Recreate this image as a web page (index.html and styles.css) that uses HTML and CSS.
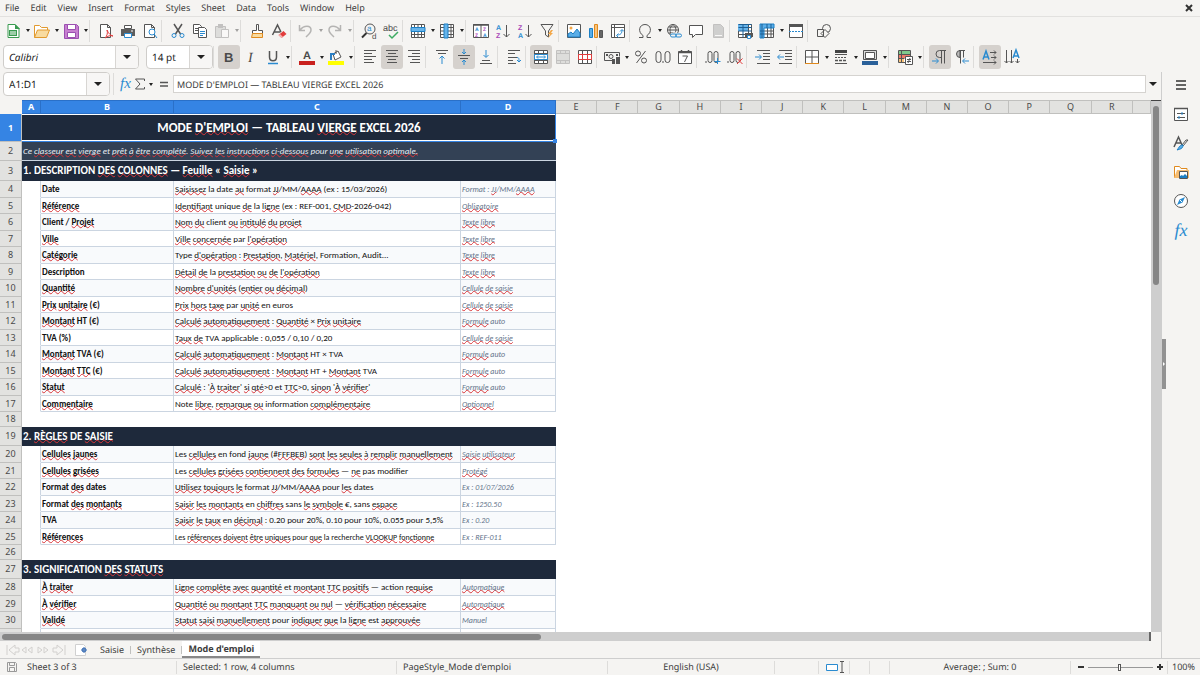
FILE: index.html
```html
<!DOCTYPE html>
<html lang="en">
<head>
<meta charset="utf-8">
<title>Mode d'emploi</title>
<link rel="stylesheet" href="styles.css">
</head>
<body>
<div class="app">
<nav class="menubar">
<button>File</button><button>Edit</button><button>View</button><button>Insert</button><button>Format</button><button>Styles</button><button>Sheet</button><button>Data</button><button>Tools</button><button>Window</button><button>Help</button>
<button class="close" aria-label="Close"><svg class="i8" viewBox="0 0 8 8"><path class="heavy" d="M1 1l6 6M7 1L1 7"/></svg></button>
</nav>

<div class="toolbars">
<div class="toolbar standard" role="toolbar" aria-label="Standard">
<button class="tb drop" aria-label="New"><svg viewBox="0 0 16 16"><path d="M3 1.500h7l4 4v9H3z" fill="#fff" stroke="#3a9b50"/><path d="M10 1v5h5z" fill="#3a9b50"/><path d="M4 7h8v6H4z" fill="#3a9b50"/><path d="M5 9h6M5 11h6" stroke="#fff"/></svg><i class="arrow"></i></button>
<button class="tb drop" aria-label="Open"><svg viewBox="0 0 16 16"><path d="M.5 14.500V2.500h5l2 2h6v3" fill="#fff" stroke="#e29a2e"/><path d="M.5 14.500l3-7.500h12l-3 7.500z" fill="#f8dba0" stroke="#e29a2e"/></svg><i class="arrow"></i></button>
<button class="tb drop" aria-label="Save"><svg viewBox="0 0 16 16"><path d="M1.500 1.500h12l2 2v12h-14z" fill="#c77fd0" stroke="#9b4fb0"/><path d="M4.500 1.500h8v5h-8zM4.500 9.500h8v5h-8z" fill="#fff" stroke="#9b4fb0"/></svg><i class="arrow"></i></button>
<span class="sep wide"></span>
<button class="tb" aria-label="Export PDF"><svg viewBox="0 0 16 16"><path class="k" fill="#fff" d="M2.500 1.500h7l3 3v10h-10zM9.500 1.500v3h3"/><path class="r" d="M9 7c2 4 3 5 6 6-3-1-5 0-8 2 2-2 3-5 2-8z"/></svg></button>
<button class="tb" aria-label="Print"><svg viewBox="0 0 16 16"><path d="M1 6h14v7H1z" fill="#5d5d5d"/><path class="k" fill="#fff" d="M4.500 2.500h7v3h-7z"/><path d="M4.500 10.500h7v4h-7z" fill="#fff" stroke="#2a8bd0"/><path d="M11 8h2" stroke="#fff"/></svg></button>
<button class="tb" aria-label="Preview"><svg viewBox="0 0 16 16"><path class="k" fill="#fff" d="M2.500 1.500h7l3 3v10h-10zM9.500 1.500v3h3"/><circle class="b" cx="10" cy="9" r="3" fill="#fff"/><path class="b" d="M12 11l3 4"/></svg></button>
<span class="sep wide"></span>
<button class="tb" aria-label="Cut"><svg viewBox="0 0 16 16"><path class="k w" d="M4 1l6.500 10M12 1L5.500 11"/><circle class="b" cx="4" cy="12.500" r="2"/><circle class="b" cx="12" cy="12.500" r="2"/></svg></button>
<button class="tb" aria-label="Copy"><svg viewBox="0 0 16 16"><path class="k" fill="#fff" d="M1.500 1.500h6l2 2v7h-8zM3 5.500h4M3 7.500h4"/><path class="k" fill="#fff" d="M6.500 4.500h6l2 2v8h-8z"/><path class="b" d="M8 8.500h5M8 10.500h5M8 12.500h3"/></svg></button>
<button class="tb drop" aria-label="Paste" disabled><svg viewBox="0 0 16 16"><path d="M1.500 3.500h10v11h-10z" fill="#bbb" stroke="#777"/><path d="M4 1h5v4H4z" fill="#777"/><path d="M7.500 6.500h7v8h-7z" fill="#fff" stroke="#777"/></svg><i class="arrow"></i></button>
<span class="sep wide"></span>
<button class="tb" aria-label="Clone formatting"><svg viewBox="0 0 16 16"><path class="k" fill="#fff" d="M7.500 1.500h2v6h4v3h-10v-3h4z"/><path d="M3.500 10.500h10v4h-11z" fill="#f8dba0" stroke="#e08a1e"/></svg></button>
<button class="tb" aria-label="Clear formatting"><svg viewBox="0 0 16 16"><path class="k w" d="M1.500 12L6.500 2l3.500 7M3.500 9h6"/><path d="M7.500 12l5-4 3 3-5 4z" fill="#e23c3c"/><path d="M7.500 12l1.500-1 3 3-1.500 1z" fill="#f6b4b4"/></svg></button>
<span class="sep"></span>
<button class="tb drop" aria-label="Undo" disabled><svg viewBox="0 0 16 16"><path class="k w" d="M1.500 2v5.500H7M2 7c4-5 11-5 11 0 0 3-3 5-5 7"/></svg><i class="arrow"></i></button>
<button class="tb drop" aria-label="Redo" disabled><svg viewBox="0 0 16 16"><path class="k w" d="M13.500 2v5.500H8M13 7C9 2 2 2 2 7c0 3 3 5 5 7"/></svg><i class="arrow"></i></button>
<span class="sep"></span>
<button class="tb" aria-label="Find and replace"><svg viewBox="0 0 16 16"><circle class="k" cx="9" cy="6" r="5"/><path class="k heavy" d="M5.500 10L1 14.500"/><text x="6" y="8" class="tblue" font-size="8">a</text><text x="11" y="16" class="tdark" font-size="8">d</text></svg></button>
<button class="tb" aria-label="Spelling"><svg viewBox="0 0 16 16"><text x="0" y="8" class="tdark" font-size="9">abc</text><path d="M6 12l3 3 6-6" fill="none" stroke="#3cab62" stroke-width="1.500"/></svg></button>
<span class="sep"></span>
<button class="tb drop" aria-label="Row"><svg viewBox="0 0 16 16"><path class="k" fill="#fff" d="M1.500 1.500h13v13h-13zM4.500 1.500v13M8 1.500v13M11.500 1.500v13M1.500 11.500h13"/><path d="M1 4.500h14v4H1z" fill="#67b4ea" stroke="#1c7fc4"/></svg><i class="arrow"></i></button>
<button class="tb drop" aria-label="Column"><svg viewBox="0 0 16 16"><path class="k" fill="#fff" d="M1.500 1.500h13v13h-13zM1.500 4.500h13M1.500 8h13M1.500 11.500h13M12 1.500v13"/><path d="M5 1h4v14H5z" fill="#67b4ea" stroke="#1c7fc4"/></svg><i class="arrow"></i></button>
<span class="sep"></span>
<button class="tb" aria-label="Sort"><svg viewBox="0 0 16 16"><path class="k" fill="#fff" d="M.5 1.500h15v13H.5zM8 2v12"/><path class="k w" d="M0 2h16"/><text x="2" y="8" class="tblue bold" font-size="5">A</text><text x="10" y="8" class="tpurple bold" font-size="5">Z</text><text x="2" y="14" class="tpurple bold" font-size="5">Z</text><text x="10" y="14" class="tblue bold" font-size="5">A</text></svg></button>
<button class="tb" aria-label="Sort ascending"><svg viewBox="0 0 16 16"><text x="1" y="7" class="tblue bold" font-size="7">A</text><text x="1" y="15" class="tpurple bold" font-size="7">Z</text><path class="k" d="M11.500 2v12M8.500 11l3 3 3-3"/></svg></button>
<button class="tb" aria-label="Sort descending"><svg viewBox="0 0 16 16"><text x="1" y="7" class="tpurple bold" font-size="7">Z</text><text x="1" y="15" class="tblue bold" font-size="7">A</text><path class="k" d="M11.500 2v12M8.500 11l3 3 3-3"/></svg></button>
<button class="tb" aria-label="AutoFilter"><svg viewBox="0 0 16 16"><path class="k" d="M2 1.500h12L9.500 8v6l-3-2V8z"/><path d="M12 7l-3 4h2l-2 4 5-5h-2l2-3z" fill="#f3a84a"/></svg></button>
<span class="sep"></span>
<button class="tb" aria-label="Image"><svg viewBox="0 0 16 16"><path class="k" fill="#fff" d="M1.500 1.500h13v13h-13z"/><circle cx="5" cy="5" r="1.500" fill="#f3a84a"/><path d="M2 14v-3l3-2 2 2 4-5 3 4v4z" fill="#5aaee8" stroke="#1c7fc4"/></svg></button>
<button class="tb" aria-label="Chart"><svg viewBox="0 0 16 16"><path d="M1.500 5.500h3v9h-3z" fill="#5aaee8" stroke="#1c7fc4"/><path d="M6.500 1.500h3v13h-3z" fill="#f8c37c" stroke="#e08a1e"/><path d="M11.500 7.500h3v7h-3z" fill="#666" stroke="#555"/></svg></button>
<button class="tb" aria-label="Pivot table"><svg viewBox="0 0 16 16"><path class="k" fill="#fff" d="M1.500 1.500h13v13h-13zM1.500 4.500h13M4.500 1.500v13"/><path class="b" d="M7 12c4 0 5-2 5-5M10 8.500l2-2 2 2M8.500 10.500l-2 2 2 2"/></svg></button>
<span class="sep"></span>
<button class="tb drop" aria-label="Special character"><svg viewBox="0 0 16 16"><path class="k" d="M2 14.500h4v-2C.5 9 2 1.500 8 1.500S15.500 9 10 12.500v2h4"/></svg><i class="arrow"></i></button>
<button class="tb" aria-label="Hyperlink"><svg viewBox="0 0 16 16"><circle class="k" cx="7" cy="7" r="5.500"/><path class="k" d="M1.500 7h11M2.500 4h9M2.500 10h5M7 1.500c-4 3-4 8 0 11M7 1.500c4 3 3 7 2 8"/><path d="M5 10h11v6H5z" fill="#f5f4f2"/><rect class="b" x="4.500" y="11" width="6" height="3" rx="1.500"/><rect class="b" x="9.500" y="11" width="6" height="3" rx="1.500"/></svg></button>
<button class="tb" aria-label="Comment"><svg viewBox="0 0 16 16"><path class="k" fill="#fff" d="M1.500 2.500h13v9h-7l-3 3v-3h-3z"/></svg></button>
<button class="tb" aria-label="Headers and footers" disabled><svg viewBox="0 0 16 16"><path d="M3.500 1.500h7l3 3v10h-10z" fill="#999" stroke="#777"/><path d="M5 12.500h7" stroke="#fff"/></svg></button>
<span class="sep"></span>
<button class="tb" aria-label="Print area"><svg viewBox="0 0 16 16"><path class="k" fill="#fff" d="M1.500 1.500h13v13h-13zM1.500 11.500h13M11.500 1.500v10"/><path d="M1 1h10v7H1z" fill="#67b4ea"/><path d="M1.500 1.500h13M1.500 4.500h13M1.500 8h13M6 1v13" stroke="#1c5f94"/><path d="M8 10h8v4H8z" fill="#555"/><path d="M10.500 12.500h3v3h-3z" fill="#fff" stroke="#2a8bd0"/></svg></button>
<button class="tb drop" aria-label="Freeze rows and columns"><svg viewBox="0 0 16 16"><path class="k" fill="#fff" d="M1.500 1.500h13v13h-13zM5 8h10M5 11h10M8.500 5v10M12 5v10"/><path d="M1 1h14v4H5v10H1z" fill="#5aaee8" stroke="#1c7fc4"/><path d="M3 1v14M8 1v4M12 1v4M1 8h4M1 11h4" stroke="#1c5f94"/></svg><i class="arrow"></i></button>
<button class="tb" aria-label="Split window"><svg viewBox="0 0 16 16"><path class="k" fill="#fff" d="M1.500 2.500h13v12h-13z"/><path d="M1 1h14v3H1z" fill="#555"/><path class="b" stroke-dasharray="2 1" d="M1 8.500h14"/></svg></button>
<span class="sep wide"></span>
<button class="tb" aria-label="Draw functions"><svg viewBox="0 0 16 16"><circle class="k" cx="10.500" cy="5.500" r="4"/><path class="k" fill="#f5f4f2" d="M1.500 6.500h6v7h-6zM9 6.500l4 4-4 4-4-4z"/></svg></button>
</div>

<div class="toolbar formatting" role="toolbar" aria-label="Formatting">
<div class="combo font"><input class="italic" value="Calibri" aria-label="Font name"><button aria-label="Font list"><i class="arrow big"></i></button></div>
<div class="combo size"><input value="14 pt" aria-label="Font size"><button aria-label="Size list"><i class="arrow big"></i></button></div>
<span class="sep"></span>
<button class="tb on" aria-label="Bold"><svg viewBox="0 0 16 16"><text x="3" y="13" class="tdark bold" font-size="13">B</text></svg></button>
<button class="tb" aria-label="Italic"><svg viewBox="0 0 16 16"><text x="5" y="13" class="tdark serif" font-size="14">I</text></svg></button>
<button class="tb drop" aria-label="Underline"><svg viewBox="0 0 16 16"><path class="k w" d="M4.500 2v6c0 5 7 5 7 0V2"/><path class="b w" d="M3 14.500h10"/></svg><i class="arrow"></i></button>
<span class="sep"></span>
<button class="tb drop" aria-label="Font color"><svg viewBox="0 0 16 16"><text x="4" y="10" class="tdark bold" font-size="11">A</text><path d="M0 12h16v4H0z" fill="#c9211e"/></svg><i class="arrow"></i></button>
<button class="tb drop" aria-label="Highlighting"><svg viewBox="0 0 16 16"><path class="k" fill="#fff" d="M5 5l5-3 3 6-6 3zM8 5V1"/><path d="M2 4h5v2H4v5H2z" fill="#2a7ec4"/><path d="M0 12h16v4H0z" fill="#ff0"/></svg><i class="arrow"></i></button>
<span class="sep"></span>
<button class="tb" aria-label="Align left"><svg viewBox="0 0 16 16"><path class="k" d="M2 1.500h12M2 4.500h8M2 7.500h12M2 10.500h8M2 13.500h10"/></svg></button>
<button class="tb on" aria-label="Center"><svg viewBox="0 0 16 16"><path class="k" d="M2 1.500h12M4 4.500h8M2 7.500h12M4 10.500h8M3 13.500h10"/></svg></button>
<button class="tb" aria-label="Align right"><svg viewBox="0 0 16 16"><path class="k" d="M2 1.500h12M6 4.500h8M2 7.500h12M6 10.500h8M4 13.500h10"/></svg></button>
<span class="sep wide"></span>
<button class="tb" aria-label="Align top"><svg viewBox="0 0 16 16"><path class="k" d="M2 1.500h12M4 4.500h8"/><path class="b" d="M8 15V7M5.500 9.500L8 7l2.500 2.500"/></svg></button>
<button class="tb on" aria-label="Center vertically"><svg viewBox="0 0 16 16"><path class="k" d="M2 6.500h12M4 9.500h8"/><path class="b" d="M8 0v5M6 3l2 2 2-2M8 16v-5M6 13l2-2 2 2"/></svg></button>
<button class="tb" aria-label="Align bottom"><svg viewBox="0 0 16 16"><path class="k" d="M2 14.500h12M4 11.500h8"/><path class="b" d="M8 1v7M5.500 6L8 8.500 10.500 6"/></svg></button>
<span class="sep wide"></span>
<button class="tb" aria-label="Wrap text"><svg viewBox="0 0 16 16"><path class="k" d="M2 1.500h12M2 4.500h7M2 8.500h9M2 11.500h5M2 14.500h8"/><path class="b" d="M11 8.500c2 0 2 1 2 4M11 11l2 2 2-2"/></svg></button>
<span class="sep"></span>
<button class="tb on" aria-label="Merge and center cells"><svg viewBox="0 0 16 16"><path class="k" fill="#fff" d="M1.500 1.500h13v13h-13zM1.500 4.500h13M5.500 1.500v3M10.500 1.500v3M5.500 11.500v3M10.500 11.500v3M1.500 11.500h13"/><path class="b" fill="#fff" d="M1.500 5.500h13v5h-13zM4 8h8M5 6.500L3.500 8 5 9.500M11 6.500L12.500 8 11 9.500"/></svg></button>
<button class="tb" aria-label="Merge cells" disabled><svg viewBox="0 0 16 16"><path d="M1.500 1.500h13v13h-13zM1.500 4.500h13M1.500 11.500h13M5.500 1.500v3M10.500 1.500v3M5.500 11.500v3M10.500 11.500v3" fill="#bbb" stroke="#777"/></svg></button>
<button class="tb" aria-label="Split cells"><svg viewBox="0 0 16 16"><path class="k" fill="#fff" d="M1.500 1.500h13v13h-13zM5.500 1.500v13M10.500 1.500v13"/><path class="r" fill="#fff" d="M1.500 5.500h13v5h-13zM5.500 5.500v5M10.500 5.500v5"/></svg></button>
<span class="sep"></span>
<button class="tb drop" aria-label="Currency"><svg viewBox="0 0 16 16"><path class="k" d="M8 11.500H.5v-8h15v4"/><circle class="k" cx="7" cy="7.500" r="2"/><path d="M8 10h3v5H8zM12 8h4v7h-4z" fill="#555"/><path d="M2 5h2v2H2zM12 5h2v2h-2z" fill="#555"/></svg><i class="arrow"></i></button>
<button class="tb" aria-label="Percent"><svg viewBox="0 0 16 16"><circle class="k" cx="5" cy="4.500" r="2.500"/><circle class="k" cx="11" cy="11.500" r="2.500"/><path class="k" d="M12.500 2l-9 12"/></svg></button>
<button class="tb" aria-label="Number"><svg viewBox="0 0 16 16"><rect class="k" x="1" y="2.500" width="5" height="11" rx="2.500"/><rect class="k" x="10" y="2.500" width="5" height="11" rx="2.500"/><path class="k" d="M8 12v2"/></svg></button>
<button class="tb" aria-label="Date"><svg viewBox="0 0 16 16"><path class="k" fill="#fff" d="M1.500 2.500h13v12h-13z"/><path class="k w" d="M1 3.500h14M4.500 1v3M11.500 1v3"/><path class="k" d="M5.500 7h5l-3 6"/></svg></button>
<span class="sep wide"></span>
<button class="tb" aria-label="Add decimal place"><svg viewBox="0 0 16 16"><path class="k" d="M1 12v2"/><rect class="k" x="3" y="2.500" width="4" height="11" rx="2"/><rect class="k" x="9" y="2.500" width="4" height="11" rx="2"/><path class="b" d="M12.500 9v6M9.500 12.500h6"/></svg></button>
<button class="tb" aria-label="Delete decimal place"><svg viewBox="0 0 16 16"><path class="k" d="M1 12v2"/><rect class="k" x="3" y="2.500" width="4" height="11" rx="2"/><rect class="k" x="9" y="2.500" width="4" height="11" rx="2"/><path class="r" d="M10 9.500l5.500 5.500M15.500 9.500L10 15"/></svg></button>
<span class="sep wide"></span>
<button class="tb" aria-label="Increase indent"><svg viewBox="0 0 16 16"><path class="k" d="M2 1.500h13M8 4.500h7M8 7.500h7M8 10.500h7M2 14.500h13"/><path class="b" d="M0 8h6M4 5.500L6.500 8 4 10.500"/></svg></button>
<button class="tb" aria-label="Decrease indent"><svg viewBox="0 0 16 16"><path class="k" d="M2 1.500h13M8 4.500h7M8 7.500h7M8 10.500h7M2 14.500h13"/><path class="b" d="M7 8H1M3 5.500L.5 8 3 10.500"/></svg></button>
<span class="sep"></span>
<button class="tb drop" aria-label="Borders"><svg viewBox="0 0 16 16"><path class="k" fill="#fff" d="M1.500 14.500v-13h13v13M8 1.500v13M1.500 8h13"/><path d="M1 14.500h14" stroke="#e08a1e"/></svg><i class="arrow"></i></button>
<button class="tb drop" aria-label="Border style"><svg viewBox="0 0 16 16"><path class="k" d="M2 5.500h12"/><path d="M2 1h12v3H2z" fill="#444"/><path class="k" stroke-dasharray="2 1" d="M2 8.500h12"/><path class="k w" stroke-dasharray="3 1" d="M2 11.500h12"/><path class="k" d="M2 14.500h12"/></svg><i class="arrow"></i></button>
<button class="tb drop" aria-label="Border color"><svg viewBox="0 0 16 16"><path class="k" fill="#ddd" d="M1.500 1.500h13v9h-13z"/><path class="k" fill="#fff" d="M3.500 3.500h9v6h-9z"/><path d="M0 12h16v4H0z" fill="#2a6099"/></svg><i class="arrow"></i></button>
<span class="sep wide"></span>
<button class="tb drop" aria-label="Conditional formatting"><svg viewBox="0 0 16 16"><path class="k" fill="#fff" d="M1.500 1.500h12v12h-12z"/><path d="M2 2h11v3H2z" fill="#7fc98c"/><path d="M2 6h11v3H2z" fill="#ef7a6a"/><path d="M2 10h5v3H2z" fill="#f8c37c"/><path class="k" d="M4.500 2v11M1.500 5.500h12M1.500 9.500h6"/><path class="k" fill="#fff" d="M8.500 7.500h7v8h-7zM10 10.500h4M10 12.500h4M13 9l-2 5"/></svg><i class="arrow"></i></button>
<span class="sep wide"></span>
<button class="tb on" aria-label="Left to right"><svg viewBox="0 0 16 16"><path class="k" d="M14 1.500H7.500a3.500 3.500 0 0 0 0 7H9M9.500 1.500v13M12.500 1.500v13"/><path class="b" d="M0 12h6M4 9.500L6.500 12 4 14.500"/></svg></button>
<button class="tb" aria-label="Right to left"><svg viewBox="0 0 16 16"><path class="k" fill="#bbb" d="M6 8.500a3.500 3.500 0 0 1 0-7z"/><path class="k" d="M5 1.500h6M6.500 1.500v13M9.500 1.500v7"/><path class="b" d="M15 12H9M11 9.500L8.500 12l2.500 2.500"/></svg></button>
<span class="sep wide"></span>
<button class="tb on" aria-label="Horizontal text"><svg viewBox="0 0 16 16"><path class="b w" d="M1 10.500L4 2l3 8.500M2 8h4"/><path class="k" d="M8 3.500h6M12 1.500l2 2-2 2M9 8.500h5M12 6.500l2 2-2 2M1 13.500h13M12 11.500l2 2-2 2"/></svg></button>
<button class="tb" aria-label="Vertical text"><svg viewBox="0 0 16 16"><path class="b w" d="M9 9l3-8 3 8M10 7h4"/><path class="k" d="M2.500 1v13M.5 12l2 2 2-2M7.500 1v13M5.500 12l2 2 2-2M13.500 10v4M11.500 12l2 2 2-2"/></svg></button>
</div>
</div>

<div class="workspace">
<main class="document">
<div class="formulabar">
<div class="combo name"><input value="A1:D1" aria-label="Name box"><button aria-label="Named ranges"><i class="arrow big"></i></button></div>
<span class="sep"></span>
<button class="fx" aria-label="Function wizard"><span class="fxmark">fx</span></button>
<button class="sum" aria-label="Select function"><svg class="i12" viewBox="0 0 12 12"><path class="k" d="M10.500 3V1h-9L6 6l-4.500 5h9V9"/></svg><i class="arrow"></i></button>
<button class="equals" aria-label="Formula"><svg class="i12" viewBox="0 0 12 12"><path class="k w" d="M2 4.500h8M2 8h8"/></svg></button>
<input class="formula" value="MODE D'EMPLOI — TABLEAU VIERGE EXCEL 2026" aria-label="Input line">
<button class="expand" aria-label="Expand formula bar"><i class="arrow big"></i></button>
</div>

<div class="sheetarea">
<div class="sheet">
<table class="grid">
<colgroup><col class="c-head"><col class="c-a"><col class="c-b"><col class="c-c"><col class="c-d"><col span="14"><col class="c-last"></colgroup>
<thead><tr><th class="corner"></th><th class="sel">A</th><th class="sel">B</th><th class="sel">C</th><th class="sel">D</th><th>E</th><th>F</th><th>G</th><th>H</th><th>I</th><th>J</th><th>K</th><th>L</th><th>M</th><th>N</th><th>O</th><th>P</th><th>Q</th><th>R</th><th></th></tr></thead>
<tbody>
<tr class="title"><th>1</th><td colspan="4">MODE <u>D'EMPLOI</u> — TABLEAU <u>VIERGE</u> EXCEL 2026<span class="handle"></span></td></tr>
<tr class="intro"><th>2</th><td colspan="4">Ce <u>classeur</u> <u>est</u> <u>vierge</u> et <u>prêt</u> <u>à</u> <u>être</u> <u>complété</u>. <u>Suivez</u> <u>les</u> <u>instructions</u> <u>ci-dessous</u> pour <u>une</u> <u>utilisation</u> <u>optimale.</u></td></tr>
<tr class="section first"><th>3</th><td colspan="4">1. DESCRIPTION <u>DES</u> <u>COLONNES</u> — <u>Feuille</u> « <u>Saisie</u> »</td></tr>
</tbody>
<tbody class="data">
<tr><th>4</th><td></td><td>Date</td><td><u>Saisissez</u> la date <u>au</u> format <u>JJ</u>/MM/<u>AAAA</u> (ex : 15/03/2026)</td><td>Format : <u>JJ</u>/MM/<u>AAAA</u></td></tr>
<tr><th>5</th><td></td><td><u>Référence</u></td><td><u>Identifiant</u> unique <u>de</u> la <u>ligne</u> (ex : REF-001, <u>CMD</u>-2026-042)</td><td><u>Obligatoire</u></td></tr>
<tr><th>6</th><td></td><td>Client / <u>Projet</u></td><td><u>Nom</u> <u>du</u> client <u>ou</u> <u>intitulé</u> <u>du</u> <u>projet</u></td><td><u>Texte</u> <u>libre</u></td></tr>
<tr><th>7</th><td></td><td><u>Ville</u></td><td><u>Ville</u> <u>concernée</u> par <u>l'opération</u></td><td><u>Texte</u> <u>libre</u></td></tr>
<tr><th>8</th><td></td><td><u>Catégorie</u></td><td>Type <u>d'opération</u> : <u>Prestation</u>, <u>Matériel</u>, Formation, Audit...</td><td><u>Texte</u> <u>libre</u></td></tr>
<tr><th>9</th><td></td><td>Description</td><td><u>Détail</u> <u>de</u> la <u>prestation</u> <u>ou</u> <u>de</u> <u>l'opération</u></td><td><u>Texte</u> <u>libre</u></td></tr>
<tr><th>10</th><td></td><td><u>Quantité</u></td><td><u>Nombre</u> <u>d'unités</u> (<u>entier</u> <u>ou</u> <u>décimal</u>)</td><td><u>Cellule</u> <u>de</u> <u>saisie</u></td></tr>
<tr><th>11</th><td></td><td><u>Prix</u> <u>unitaire</u> (€)</td><td><u>Prix</u> <u>hors</u> <u>taxe</u> par <u>unité</u> en euros</td><td><u>Cellule</u> <u>de</u> <u>saisie</u></td></tr>
<tr><th>12</th><td></td><td><u>Montant</u> HT (€)</td><td><u>Calculé</u> <u>automatiquement</u> : <u>Quantité</u> × <u>Prix</u> <u>unitaire</u></td><td><u>Formule</u> auto</td></tr>
<tr><th>13</th><td></td><td>TVA (%)</td><td><u>Taux</u> <u>de</u> TVA applicable : 0,055 / 0,10 / 0,20</td><td><u>Cellule</u> <u>de</u> <u>saisie</u></td></tr>
<tr><th>14</th><td></td><td><u>Montant</u> TVA (€)</td><td><u>Calculé</u> <u>automatiquement</u> : <u>Montant</u> HT × TVA</td><td><u>Formule</u> auto</td></tr>
<tr><th>15</th><td></td><td><u>Montant</u> <u>TTC</u> (€)</td><td><u>Calculé</u> <u>automatiquement</u> : <u>Montant</u> HT + <u>Montant</u> TVA</td><td><u>Formule</u> auto</td></tr>
<tr><th>16</th><td></td><td><u>Statut</u></td><td><u>Calculé</u> : '<u>À</u> <u>traiter</u>' <u>si</u> <u>qté</u>&gt;0 et <u>TTC</u>&gt;0, <u>sinon</u> '<u>À</u> <u>vérifier</u>'</td><td><u>Formule</u> auto</td></tr>
<tr><th>17</th><td></td><td><u>Commentaire</u></td><td>Note <u>libre</u>, <u>remarque</u> <u>ou</u> information <u>complémentaire</u></td><td><u>Optionnel</u></td></tr>
</tbody>
<tbody>
<tr class="blank"><th>18</th><td colspan="4"></td></tr>
<tr class="section"><th>19</th><td colspan="4">2. <u>RÈGLES</u> DE <u>SAISIE</u></td></tr>
</tbody>
<tbody class="data">
<tr><th>20</th><td></td><td><u>Cellules</u> <u>jaunes</u></td><td>Les <u>cellules</u> en fond <u>jaune</u> (#<u>FFFBEB</u>) <u>sont</u> <u>les</u> <u>seules</u> <u>à</u> <u>remplir</u> <u>manuellement</u></td><td><u>Saisie</u> <u>utilisateur</u></td></tr>
<tr><th>21</th><td></td><td><u>Cellules</u> <u>grisées</u></td><td>Les <u>cellules</u> <u>grisées</u> <u>contiennent</u> <u>des</u> <u>formules</u> — <u>ne</u> pas modifier</td><td><u>Protégé</u></td></tr>
<tr><th>22</th><td></td><td>Format <u>des</u> dates</td><td><u>Utilisez</u> <u>toujours</u> <u>le</u> format <u>JJ</u>/MM/<u>AAAA</u> pour <u>les</u> dates</td><td>Ex : 01/07/2026</td></tr>
<tr><th>23</th><td></td><td>Format <u>des</u> <u>montants</u></td><td><u>Saisir</u> <u>les</u> <u>montants</u> en <u>chiffres</u> sans <u>le</u> <u>symbole</u> €, sans <u>espace</u></td><td>Ex : 1250.50</td></tr>
<tr><th>24</th><td></td><td>TVA</td><td><u>Saisir</u> <u>le</u> <u>taux</u> en <u>décimal</u> : 0.20 pour 20%, 0.10 pour 10%, 0.055 pour 5,5%</td><td>Ex : 0.20</td></tr>
<tr><th>25</th><td></td><td><u>Références</u></td><td class="shrink">Les <u>références</u> <u>doivent</u> <u>être</u> <u>uniques</u> pour <u>que</u> la recherche <u>VLOOKUP</u> <u>fonctionne</u></td><td>Ex : REF-011</td></tr>
</tbody>
<tbody>
<tr class="blank"><th>26</th><td colspan="4"></td></tr>
<tr class="section"><th>27</th><td colspan="4">3. SIGNIFICATION <u>DES</u> <u>STATUTS</u></td></tr>
</tbody>
<tbody class="data">
<tr><th>28</th><td></td><td><u>À</u> <u>traiter</u></td><td><u>Ligne</u> <u>complète</u> <u>avec</u> <u>quantité</u> et <u>montant</u> <u>TTC</u> <u>positifs</u> — action <u>requise</u></td><td><u>Automatique</u></td></tr>
<tr><th>29</th><td></td><td><u>À</u> <u>vérifier</u></td><td><u>Quantité</u> <u>ou</u> <u>montant</u> <u>TTC</u> <u>manquant</u> <u>ou</u> <u>nul</u> — <u>vérification</u> <u>nécessaire</u></td><td><u>Automatique</u></td></tr>
<tr><th>30</th><td></td><td><u>Validé</u></td><td><u>Statut</u> <u>saisi</u> <u>manuellement</u> pour <u>indiquer</u> <u>que</u> la <u>ligne</u> est <u>approuvée</u></td><td>Manuel</td></tr>
<tr><th></th><td></td><td></td><td></td><td></td></tr>
</tbody>
</table>
</div>
<div class="vscroll"><div class="thumb"></div></div>
</div>
<div class="hscroll"><div class="track"><div class="thumb"></div></div></div>

<div class="tabs">
<svg class="nav" viewBox="0 0 60 12"><path d="M1 1v10M9 1L3 6l6 5V8h4V4H9zM20 3l-4 3 4 3zM26 3l-4 3 4 3zM32 3v6l4-3zM38 3v6l4-3zM51 1l6 5-6 5V8h-4V4h4zM59 1v10"/></svg>
<button class="add" aria-label="Add sheet"><svg class="i12" viewBox="0 0 12 12"><path d="M.5.500h8l2 2v9H.5z" fill="#fff" stroke="#d0d0d0"/><circle cx="9" cy="6" r="2" fill="#fff" stroke="#2a62ae"/><path d="M9 3.500v5M6.500 6h5" stroke="#2a62ae"/></svg></button>
<button class="tab">Saisie</button><span class="bar"></span><button class="tab">Synthèse</button><span class="bar"></span><button class="tab current">Mode d'emploi</button>
</div>
</main>

<aside class="sidebar">
<span class="sash"></span>
<button aria-label="Sidebar settings"><svg viewBox="0 0 16 16"><path d="M3 4h10M3 8h10M3 12h10" stroke="#333" stroke-width="1.500"/></svg></button>
<button aria-label="Properties"><svg viewBox="0 0 16 16"><path class="k" fill="#fff" d="M1.500 2.500h13v12h-13z"/><path class="k w" d="M1 2.500h14"/><path class="k" d="M4 7.500h8M4 11.500h8"/><path class="b" d="M9 6v3M6 10v3"/></svg></button>
<button aria-label="Styles"><svg viewBox="0 0 16 16"><path class="k w" d="M1 12L5.500 2 9 10M3 8h5"/><path class="k" d="M15 5l-5 6-1-1 4-5z"/><path d="M10 10c0 4-3 4-6 5 2-2 2-5 6-5z" fill="#5aaee8" stroke="#1c7fc4"/></svg></button>
<button aria-label="Gallery"><svg viewBox="0 0 16 16"><path d="M1.500 14V2.500h5l1.500 2h6V7" fill="#fff" stroke="#e08a1e"/><path d="M1 14l3-8h12v8z" fill="#f6bd72"/><path class="k" fill="#fff" d="M6.500 7.500h8v7h-8z"/><path d="M7 14v-2l2-1 1 1 2-2 2 2v2z" fill="#1c7fc4"/></svg></button>
<button aria-label="Navigator"><svg viewBox="0 0 16 16"><circle class="k" cx="8" cy="8" r="6.500" fill="#fff"/><path d="M12 4l-2.500 5.500L4 12l2.500-5.500z" fill="#2a8bd0"/><path d="M7 7l2 2" stroke="#fff"/></svg></button>
<button aria-label="Functions"><span class="fxmark large">fx</span></button>
</aside>
</div>

<footer class="status">
<span class="cell s-sheet"><svg class="i12" viewBox="0 0 12 12"><path d="M1.500 1.500h8l1 1v8h-9zM3.500 1.500v3h5v-3M3.500 10.500v-4h5v4" fill="none" stroke="#999"/></svg>Sheet 3 of 3</span>
<span class="cell s-sel">Selected: 1 row, 4 columns</span>
<span class="cell s-style">PageStyle_Mode d'emploi</span>
<span class="cell s-lang">English (USA)</span>
<span class="cell s-gap"></span>
<span class="cell s-mode"><svg viewBox="0 0 20 12"><path d="M1.500 3.500h11v6h-11z" fill="#fff" stroke="#2a8bd0"/><path class="k" d="M15 .5h4M17 .5v11M15 11.500h4"/></svg></span>
<span class="cell s-small"></span><span class="cell s-small"></span>
<span class="cell s-sum">Average: ; Sum: 0</span>
<span class="cell s-zoom"><button aria-label="Zoom out"><svg class="i8" viewBox="0 0 8 8"><path class="heavy" d="M1 4h6"/></svg></button><input type="range" min="0" max="100" value="48" aria-label="Zoom"><button aria-label="Zoom in"><svg class="i8" viewBox="0 0 8 8"><path class="heavy" d="M1 4h6M4 1v6"/></svg></button></span>
<span class="cell s-pct">100%</span>
</footer>
</div>
</body>
</html>
```
FILE: styles.css
```css
* { box-sizing: border-box; }
body {
  margin: 0;
  font: 10px/14px "Noto Sans", "Open Sans", sans-serif;
  color: #3c3c3c;
  background: #f5f4f2;
  text-rendering: geometricPrecision;
}
button {
  margin: 0;
  padding: 0;
  border: 0;
  background: none;
  font: inherit;
  color: inherit;
  text-rendering: inherit;
}
input { font: inherit; color: inherit; margin: 0; min-width: 0; text-rendering: inherit; }
svg { display: block; width: 16px; height: 16px; flex: none; overflow: visible; }
svg text { font-family: "Liberation Sans", sans-serif; }
svg.i12 { width: 12px; height: 12px; }
svg.i8 { width: 8px; height: 8px; }
.k { stroke: #555; }
.b { stroke: #2a8bd0; }
.r { stroke: #e23c3c; }
.k:not([fill]), .b:not([fill]), .r:not([fill]) { fill: none; }
.w { stroke-width: 1.500; }
.heavy { stroke: #333; stroke-width: 2; fill: none; }
.tdark { fill: #4a4a4a; }
.tblue { fill: #2a8bd0; }
.tpurple { fill: #a846b8; }
.bold { font-weight: 700; }
svg .serif { font-family: "Liberation Serif", serif; font-style: italic; }
.italic { font-style: italic; }

.app { display: flex; flex-direction: column; height: 100vh; overflow: hidden; }

.menubar {
  display: flex;
  align-items: center;
  gap: 11px;
  height: 17px;
  flex: none;
  padding: 0 7px 0 5px;
  border-bottom: 1px solid #e2e1df;
  font-size: 9px;
}
.menubar .close { margin-left: auto; }

.toolbars { flex: none; display: flex; flex-direction: column; padding-bottom: 2px; }
.toolbar { display: flex; align-items: center; padding-left: 2px; }
.standard { height: 27px; }
.formatting { height: 26px; padding-left: 3px; }
.tb {
  width: 22px;
  height: 22px;
  flex: none;
  display: flex;
  align-items: center;
  padding-left: 3px;
  border-radius: 3px;
}
.formatting .tb { height: 24px; }
.tb.drop { width: 29px; }
.tb.on { background: #d5d1cd; }
.tb:disabled svg, .tb:disabled .arrow { opacity: 0.4; }
.sep { flex: none; width: 5px; height: 22px; border-left: 1px solid #dddcda; }
.sep.wide { width: 6px; }
.arrow {
  flex: none;
  border: 2px solid transparent;
  border-top: 3px solid #222;
  border-bottom: 0;
  margin-left: 5px;
}
.arrow.big { border-width: 4px 4px 0; margin: 0; }

.combo {
  display: flex;
  flex: none;
  height: 24px;
  border: 1px solid #cfcdca;
  border-radius: 4px;
  background: #fff;
  overflow: hidden;
}
.combo input { flex: 1; border: 0; padding: 0 0 0 5px; background: none; color: #222; outline: 0; }
.combo button {
  width: 23px;
  flex: none;
  display: flex;
  align-items: center;
  justify-content: center;
  border-left: 1px solid #d8d6d3;
  background: #f7f6f5;
}
.combo.font { width: 136px; margin-right: 7px; }
.combo.size { width: 67px; }
.combo.name { width: 107px; margin-right: 3px; }

.workspace { flex: 1; min-height: 0; display: flex; }
.document { flex: 1; min-width: 0; display: flex; flex-direction: column; }
.formulabar {
  height: 28px;
  flex: none;
  display: flex;
  align-items: center;
  padding: 0 2px 4px 3px;
}
.fxmark { font: italic 15px/16px "Liberation Serif", serif; color: #2a8bd0; }
.fxmark.large { font-size: 18px; }
.fx { width: 15px; }
.sum { display: flex; align-items: center; width: 24px; margin-left: 1px; }
.sum .arrow { margin-left: 3px; }
.equals { width: 15px; }
.formula {
  flex: 1;
  height: 18px;
  border: 1px solid #d5d3d0;
  background: #fff;
  padding: 0 0 0 3px;
  font-size: 9px;
}
.expand { width: 13px; display: flex; justify-content: center; }

.sheetarea { flex: 1; min-height: 0; display: flex; }
.sheet { flex: 1; min-width: 0; overflow: hidden; background: #fff; }
.grid {
  width: 100%;
  table-layout: fixed;
  border-collapse: separate;
  border-spacing: 0;
  text-rendering: auto;
}
.c-head { width: 22px; }
.c-a { width: 19px; }
.c-b { width: 133px; }
.c-c { width: 287px; }
.c-d { width: 95px; }
.c-last { width: 18px; }
.grid th {
  padding: 0;
  font-size: 9px;
  line-height: 12px;
  font-weight: 400;
  color: #4a4a4a;
  background: #e2e2e0;
  border-right: 1px solid #c0c0be;
  border-bottom: 1px solid #c0c0be;
}
.grid thead th { height: 14px; border-top: 1px solid #c0c0be; }
.grid thead th.corner { background: #f5f4f2; border-color: #f5f4f2; }
.grid thead th.sel {
  background: #3584e4;
  border-color: #2a70c8;
  color: #fff;
  font-weight: 700;
}
.grid td {
  padding: 0 0 0 1px;
  overflow: hidden;
  white-space: nowrap;
  font-family: Carlito, Lato, sans-serif;
  font-size: 9px;
  line-height: 12px;
  color: #111;
}
u {
  text-decoration: underline wavy #d9363a 1px;
  text-decoration-skip-ink: none;
  text-underline-offset: -1px;
}
.grid .title td {
  position: relative;
  overflow: visible;
  height: 28px;
  background: #1e293b;
  color: #fff;
  font-size: 13px;
  line-height: 16px;
  font-weight: 700;
  text-align: center;
  border-bottom: 1px solid #3584e4;
  border-right: 1px solid #3584e4;
  box-shadow: inset 0 -1px #fff, inset 0 1px #fff;
}
.grid .title th { background: #3584e4; color: #fff; font-weight: 700; }
.handle {
  position: absolute;
  right: -2px;
  bottom: -2px;
  width: 4px;
  height: 4px;
  background: #3584e4;
}
.grid .intro td {
  height: 19px;
  background: #334155;
  color: #e6ebf2;
  font-style: italic;
  border-bottom: 1px solid #cbd5e1;
}
.grid .section td {
  height: 19px;
  background: #1e293b;
  color: #fff;
  font-size: 11px;
  line-height: 14px;
  font-weight: 700;
}
.grid .section.first td { height: 20px; }
.blank td { height: 15px; }
.data td { height: 16px; border-right: 1px solid #cbd5e1; border-bottom: 1px solid #cbd5e1; }
.data tr:nth-child(odd) td { height: 17px; background: #f8fafc; }
.data tr td:nth-child(2) { background: #fff; border-bottom-color: #fff; }
.data tr:nth-child(odd) td:nth-child(2) { background: #fff; }
.data td:nth-child(3) { font-weight: 700; }
.grid .data td:nth-child(5) { font-size: 8px; font-style: italic; color: #64748b; }
.grid td.shrink { font-size: 8px; }

.vscroll { width: 10px; flex: none; background: #cecece; padding: 5px 2px 0; border-top: 1px solid #444; }
.vscroll .thumb { height: 34%; border-radius: 3px; background: #868686; }
.hscroll { height: 9px; flex: none; padding-right: 10px; }
.track { height: 100%; background: #cecece; padding: 2px 0 2px 2px; border-right: 2px solid #666; }
.track .thumb { width: 47%; height: 6px; border-radius: 3px; background: #868686; }

.tabs { height: 17px; flex: none; display: flex; align-items: center; padding-left: 6px; font-size: 9px; }
.nav { width: 60px; height: 12px; fill: none; stroke: #d2d0ce; }
.add { margin: 0 7px 0 9px; }
.tab { padding: 0 6px; height: 17px; }
.tab.current { background: #fff; font-weight: 700; border-bottom: 2px solid #888; }
.bar { width: 1px; height: 8px; background: #c0c0be; }

.sidebar {
  position: relative;
  width: 39px;
  flex: none;
  border-left: 1px solid #cecece;
  display: flex;
  flex-direction: column;
  align-items: center;
  gap: 13px;
  padding-top: 5px;
}
.sidebar button { height: 16px; display: flex; align-items: center; }
.sash { position: absolute; left: 0; top: 267px; width: 4px; height: 50px; background: #929292; }
.sash::after {
  content: "";
  position: absolute;
  left: 1px;
  top: 23px;
  border: 2px solid transparent;
  border-left-color: #fff;
  border-right: 0;
}

.status {
  height: 17px;
  flex: none;
  display: flex;
  align-items: center;
  border-top: 1px solid #cecece;
  font-size: 9px;
}
.cell {
  height: 13px;
  display: flex;
  align-items: center;
  flex: none;
  border-right: 1px solid #dddcda;
  padding-left: 6px;
  white-space: nowrap;
}
.s-sheet { width: 177px; gap: 9px; }
.s-sel { width: 220px; }
.s-style { width: 211px; }
.s-lang { width: 167px; justify-content: center; padding: 0; }
.s-gap { width: 44px; }
.s-mode { width: 31px; }
.s-mode svg { width: 20px; height: 12px; }
.s-small { width: 20px; }
.s-sum { flex: 1; justify-content: center; padding: 0; }
.s-zoom { width: 97px; gap: 3px; }
.s-zoom input {
  appearance: none;
  width: 65px;
  height: 9px;
  background: linear-gradient(#999, #999) center / 100% 1px no-repeat;
}
.s-zoom input::-webkit-slider-thumb {
  appearance: none;
  width: 3px;
  height: 7px;
  border: 1px solid #555;
  background: #fff;
}
.s-pct { width: 32px; border: 0; padding-left: 4px; }
```
